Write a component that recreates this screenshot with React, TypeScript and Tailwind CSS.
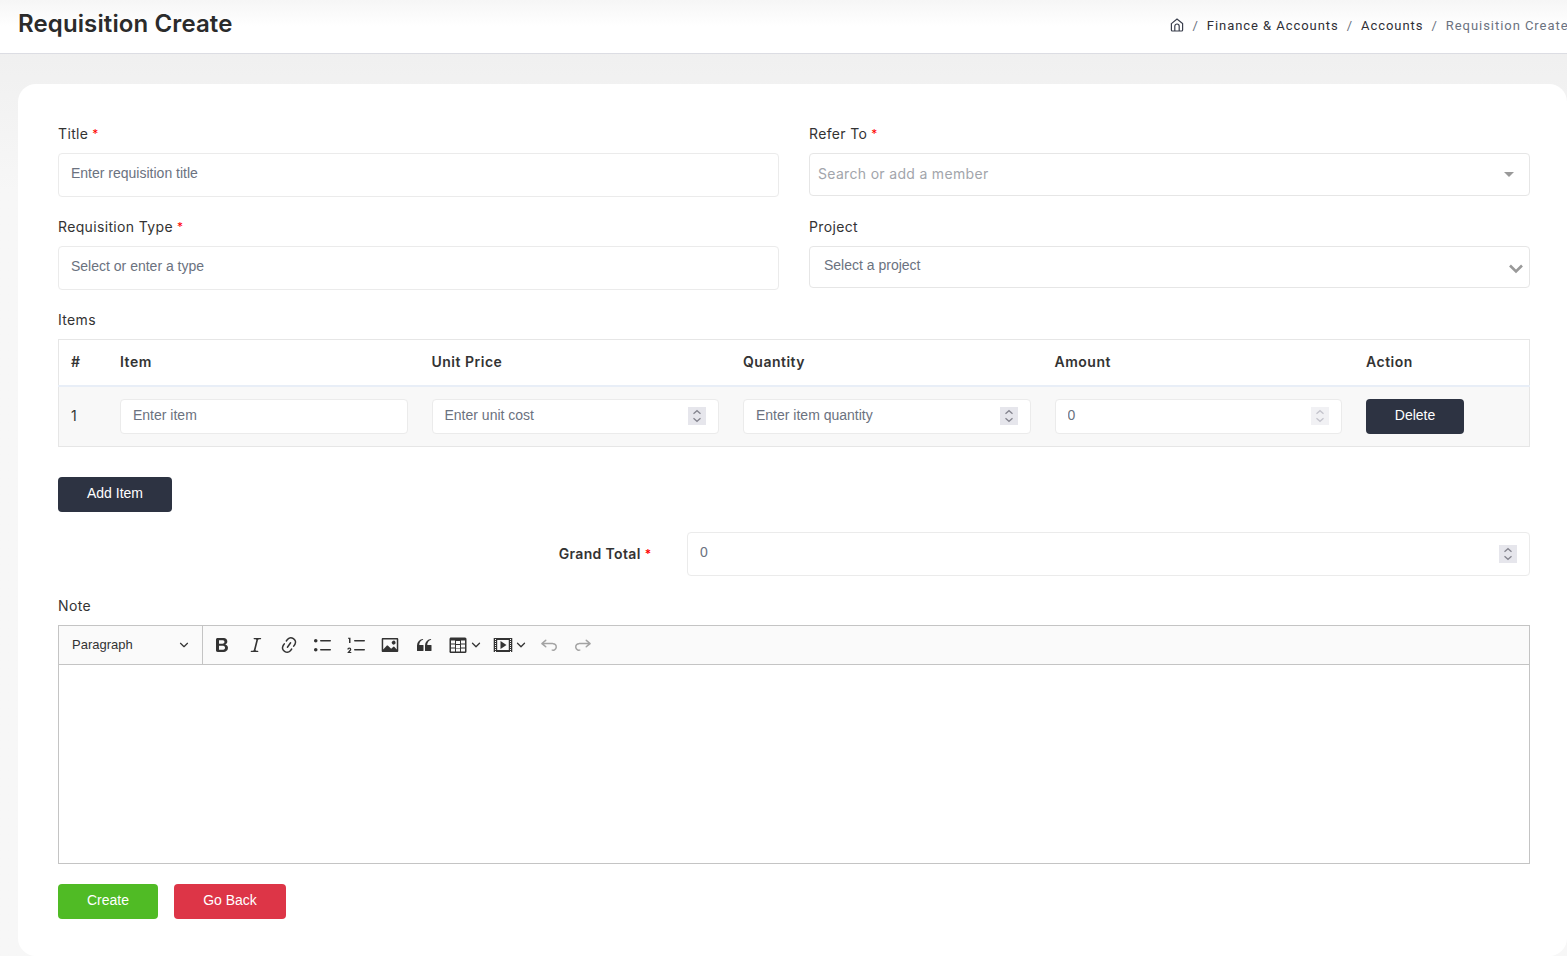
import type { ReactNode } from "react";
import { ChevronDown } from "lucide-react";

const icons: Record<string, string> = {
  bold: "M10.187 17H5.773c-.637 0-1.092-.138-1.364-.415-.273-.277-.409-.718-.409-1.323V4.738c0-.617.14-1.062.419-1.332.279-.27.73-.406 1.354-.406h4.68c.69 0 1.288.041 1.793.124.506.083.96.242 1.36.478.341.197.644.447.906.75a3.262 3.262 0 0 1 .808 2.162c0 1.401-.722 2.426-2.167 3.075C15.05 10.175 16 11.315 16 13.01a3.756 3.756 0 0 1-2.296 3.504 6.1 6.1 0 0 1-1.517.377c-.571.073-1.238.11-2 .11zm-.217-6.217H7v4.087h3.069c1.977 0 2.965-.69 2.965-2.072 0-.707-.256-1.22-.768-1.537-.512-.319-1.277-.478-2.296-.478zM7 5.13v3.619h2.606c.729 0 1.292-.067 1.69-.2a1.6 1.6 0 0 0 .91-.765c.165-.267.247-.566.247-.897 0-.707-.26-1.176-.778-1.409-.519-.232-1.31-.348-2.375-.348H7z",
  italic: "m9.586 14.633.021.004c-.036.335.095.655.393.962.082.083.173.15.274.201h1.474a.6.6 0 1 1 0 1.2H5.304a.6.6 0 0 1 0-1.2h1.15c.474-.07.809-.182 1.005-.334.157-.122.291-.32.404-.597l2.416-9.55a1.053 1.053 0 0 0-.281-.823 1.12 1.12 0 0 0-.442-.296H8.15a.6.6 0 0 1 0-1.2h6.443a.6.6 0 1 1 0 1.2h-1.195c-.376.056-.65.155-.823.296-.215.175-.423.439-.623.79l-2.366 9.347z",
  link: "m11.077 15 .991-1.416a.75.75 0 1 1 1.229.86l-1.148 1.64a.748.748 0 0 1-.217.206 5.251 5.251 0 0 1-8.503-5.955.741.741 0 0 1 .12-.274l1.147-1.639a.75.75 0 1 1 1.228.86L4.933 10.7l.006.003a3.75 3.75 0 0 0 6.132 4.294l.006.004zm5.494-5.335a.748.748 0 0 1-.12.274l-1.147 1.639a.75.75 0 1 1-1.228-.86l.86-1.23a3.75 3.75 0 0 0-6.144-4.301l-.86 1.229a.75.75 0 0 1-1.229-.86l1.148-1.64a.748.748 0 0 1 .217-.206 5.251 5.251 0 0 1 8.503 5.955zm-4.563-2.532a.75.75 0 0 1 .184 1.045l-3.155 4.505a.75.75 0 1 1-1.229-.86l3.155-4.506a.75.75 0 0 1 1.045-.184z",
  bullet: "M7 5.75c0 .414.336.75.75.75h9.5a.75.75 0 1 0 0-1.5h-9.5a.75.75 0 0 0-.75.75zm-6 0C1 4.784 1.777 4 2.75 4c.966 0 1.75.777 1.75 1.75 0 .966-.777 1.75-1.75 1.75C1.784 7.5 1 6.723 1 5.75zm6 9c0 .414.336.75.75.75h9.5a.75.75 0 1 0 0-1.5h-9.5a.75.75 0 0 0-.75.75zm-6 0c0-.966.777-1.75 1.75-1.75.966 0 1.75.777 1.75 1.75 0 .966-.777 1.75-1.75 1.75-.966 0-1.75-.777-1.75-1.75z",
  numbered: "M7 5.75c0 .414.336.75.75.75h9.5a.75.75 0 1 0 0-1.5h-9.5a.75.75 0 0 0-.75.75zM3.5 3v5H2V3.7H1v-1h2.5V3zM.343 17.857l2.59-3.257H2.92a.6.6 0 1 0-1.04 0H.302a2 2 0 1 1 3.995 0h-.001c-.048.405-.16.734-.333.988-.175.254-.59.692-1.244 1.312H4.3v1h-4l.043-.043zM7 14.75a.75.75 0 0 1 .75-.75h9.5a.75.75 0 1 1 0 1.5h-9.5a.75.75 0 0 1-.75-.75z",
  image: "M6.91 10.54c.26-.23.64-.21.88.03l3.36 3.14 2.23-2.06a.64.64 0 0 1 .87 0l2.52 2.97V4.5H3.2v10.12l3.71-4.08zm10.27-7.51c.6 0 1.09.47 1.09 1.05v11.84c0 .59-.49 1.06-1.09 1.06H2.79c-.6 0-1.09-.47-1.09-1.06V4.08c0-.58.49-1.05 1.1-1.05h14.38zm-5.22 5.56a1.96 1.96 0 1 1 3.4-1.96 1.96 1.96 0 0 1-3.4 1.96z",
  quote: "M3 10.423a6.5 6.5 0 0 1 6.056-6.408l.038.67C6.448 5.423 5.354 7.663 5.22 10H9c.552 0 .5.432.5.986v4.511c0 .554-.448.503-1 .503h-5c-.552 0-.5-.449-.5-1.003v-4.574zm8 0a6.5 6.5 0 0 1 6.056-6.408l.038.67c-2.646.739-3.74 2.979-3.873 5.315H17c.552 0 .5.432.5.986v4.511c0 .554-.448.503-1 .503h-5c-.552 0-.5-.449-.5-1.003v-4.574z",
  table: "M3 5.5v3h4v-3H3zm0 4v3h4v-3H3zm0 4v3h4v-3H3zm5 3h4v-3H8v3zm5 0h4v-3h-4v3zm4-4v-3h-4v3h4zm0-4v-3h-4v3h4zm1.5 8a1.5 1.5 0 0 1-1.5 1.5H3A1.5 1.5 0 0 1 1.5 16V4c0-.828.672-1.5 1.5-1.5h14a1.5 1.5 0 0 1 1.5 1.5v12zm-6.5-7.5v-3H8v3h4zm0 4v-3H8v3h4z",
  media: "M18.68 3.03c.6 0 .59-.03.59.55v12.84c0 .59.01.56-.59.56H1.29c-.6 0-.59.03-.59-.56V3.58c0-.58 0-.55.6-.55h17.38zM15.77 15V5H4.2v10h11.57zM2 4v1h1V4H2zm0 2v1h1V6H2zm0 2v1h1V8H2zm0 2v1h1v-1H2zm0 2v1h1v-1H2zm0 2v1h1v-1H2zm0 2v1h1v-1H2zM17 4v1h1V4h-1zm0 2v1h1V6h-1zm0 2v1h1V8h-1zm0 2v1h1v-1h-1zm0 2v1h1v-1h-1zm0 2v1h1v-1h-1zm0 2v1h1v-1h-1zM7.5 6l6 4-6 4V6z",
  undo: "m5.042 9.367 2.189 1.837a.75.75 0 0 1-.965 1.149l-3.788-3.18a.747.747 0 0 1-.21-.284.75.75 0 0 1 .17-.945L6.23 4.762a.75.75 0 1 1 .964 1.15L4.863 7.866h8.917A.75.75 0 0 1 14 7.9a4 4 0 1 1-1.477 7.718l.344-1.489a2.5 2.5 0 1 0 1.094-4.73l.008-.032H5.042z",
  redo: "m14.958 9.367-2.189 1.837a.75.75 0 0 0 .965 1.149l3.788-3.18a.747.747 0 0 0 .21-.284.75.75 0 0 0-.17-.945L13.77 4.762a.75.75 0 1 0-.964 1.15l2.331 1.955H6.22A.75.75 0 0 0 6 7.9a4 4 0 1 0 1.477 7.718l-.344-1.489A2.5 2.5 0 1 1 6.039 9.4l-.008-.032h8.927z",
};

function EditorIcon({ name, muted }: { name: string; muted?: boolean }) {
  return (
    <svg viewBox="0 0 20 20" className={`h-5 w-5 shrink-0 ${muted ? "text-[#a3a3a3]" : "text-[#333333]"}`} fill="currentColor">
      <path d={icons[name]} />
    </svg>
  );
}

function ToolButton({ name, muted, dropdown, className = "" }: { name: string; muted?: boolean; dropdown?: boolean; className?: string }) {
  return (
    <div className={`flex h-[38px] items-center justify-center ${dropdown ? "w-[44px]" : "w-[33.6px]"} ${className}`}>
      <EditorIcon name={name} muted={muted} />
      {dropdown && <ChevronDown className="ml-[1px] h-[14px] w-[14px] shrink-0 text-[#333333]" strokeWidth={2.2} />}
    </div>
  );
}

function Label({ text, required, className = "" }: { text: string; required?: boolean; className?: string }) {
  return (
    <label className={`block text-sm leading-5 tracking-[0.35px] text-[#333333] ${className}`}>
      {text}
      {required && <span className="relative -top-[1px] ml-[4px] text-xs text-[#ff0000]">*</span>}
    </label>
  );
}

function Stepper({ faded }: { faded?: boolean }) {
  return (
    <span className={`absolute right-[13px] top-1/2 flex h-[18px] w-[18px] -translate-y-1/2 items-center justify-center ${faded ? "bg-[#f1f1f4] text-[#c4c4cc]" : "bg-[#e6e6ec] text-[#85858f]"}`}>
      <svg viewBox="0 0 18 18" className="h-[18px] w-[18px]" fill="none" stroke="currentColor" strokeWidth="1.3">
        <path d="M5.5 6.7 9 3.7l3.5 3" />
        <path d="M5.5 11.3 9 14.3l3.5-3" />
      </svg>
    </span>
  );
}

function TextBox({ placeholder, value, stepper, faded, compact, className = "" }: { placeholder?: string; value?: string; stepper?: boolean; faded?: boolean; compact?: boolean; className?: string }) {
  return (
    <div className={`relative ${className}`}>
      <input
        type="text"
        readOnly
        placeholder={placeholder}
        value={value ?? ""}
        className={`h-full w-full rounded-[4px] border border-[#ebebeb] bg-white pl-[12px] pr-[36px] font-['Liberation_Sans',sans-serif] text-sm text-[#6b7280] placeholder:text-[#6b7280] outline-none ${compact ? "pb-[2px]" : "pb-[4px]"}`}
      />
      {stepper && <Stepper faded={faded} />}
    </div>
  );
}

function HeaderCell({ children, className = "" }: { children: ReactNode; className?: string }) {
  return <th className={`h-[46px] border-b-2 border-[#e8eef7] p-0 px-[12px] text-left text-sm font-semibold tracking-[0.5px] text-[#333333] ${className}`}>{children}</th>;
}

export default function App() {
  return (
    <div className="flex h-[956px] w-[1567px] flex-col overflow-hidden bg-gradient-to-b from-[#ededed] to-[#f7f7f7] to-[20%] font-['Inter',sans-serif]">
      <header className="flex h-[54px] shrink-0 items-start justify-between border-b border-[#dcdde3] bg-gradient-to-b from-[#f6f6f6] via-white to-white pl-[18px]">
        <h1 className="mt-[7px] text-2xl font-semibold leading-[34px] tracking-[0.12px] text-[#2b2b2b]">Requisition Create</h1>
        <nav className="-mr-[1.5px] mt-[16px] flex shrink-0 items-center font-['Roboto',sans-serif] text-[13px] leading-5 tracking-[0.95px] text-[#2f2f36]">
          <svg viewBox="0 0 14 14" className="-mt-[3px] h-[14px] w-[14px]" fill="none" stroke="#3a3f4d" strokeWidth="1.2">
            <path d="M1.4 5.6 7 1l5.6 4.6V12a1 1 0 0 1-1 1H2.4a1 1 0 0 1-1-1z" />
            <path d="M4.8 13V8.2a2.2 2.2 0 0 1 4.4 0V13" />
          </svg>
          <span className="mx-[8px] text-[#6b7280]">/</span>
          <span>Finance &amp; Accounts</span>
          <span className="mx-[8px] text-[#6b7280]">/</span>
          <span>Accounts</span>
          <span className="mx-[8px] text-[#6b7280]">/</span>
          <span className="text-[#6b7280]">Requisition Create</span>
        </nav>
      </header>

      <main className="ml-[18px] mt-[30px] flex-1 rounded-[18px] bg-white pl-[40px] pr-[37px] pt-[40px]">
        <div className="grid grid-cols-2 gap-x-[30px]">
          <div>
            <Label text="Title" required />
            <TextBox placeholder="Enter requisition title" className="mt-[9px] h-[44px]" />
          </div>
          <div>
            <Label text="Refer To" required />
            <div className="mt-[9px] flex h-[43px] items-center justify-between rounded-[4px] border border-[#e6e6e6] pl-[8px] pr-[15px]">
              <span className="pb-[2px] text-sm tracking-[0.32px] text-[#a2a5ab]">Search or add a member</span>
              <span className="h-0 w-0 border-x-[5px] border-t-[5px] border-x-transparent border-t-[#999999]" />
            </div>
          </div>
        </div>

        <div className="mt-[20px] grid grid-cols-2 gap-x-[30px]">
          <div>
            <Label text="Requisition Type" required />
            <TextBox placeholder="Select or enter a type" className="mt-[9px] h-[44px]" />
          </div>
          <div>
            <Label text="Project" />
            <div className="relative mt-[9px] flex h-[42px] items-center rounded-[4px] border border-[#e6e6e6] pb-[4px] pl-[14px] font-['Liberation_Sans',sans-serif] text-sm text-[#6b7280]">
              Select a project
              <svg viewBox="0 0 14 10" className="absolute right-[6px] top-[17px] h-[10px] w-[14px]" fill="none" stroke="#999999" strokeWidth="2.6">
                <path d="M1 1.5 7 7.5l6-6" />
              </svg>
            </div>
          </div>
        </div>

        <Label text="Items" className="mt-[20px]" />
        <table className="mt-[9px] w-full table-fixed border-collapse border border-[#e6e6e6]">
          <colgroup>
            <col className="w-[49.5px]" />
            <col className="w-[311.5px]" />
            <col className="w-[311.5px]" />
            <col className="w-[311.5px]" />
            <col className="w-[311.5px]" />
            <col />
          </colgroup>
          <thead>
            <tr>
              <HeaderCell>#</HeaderCell>
              <HeaderCell>Item</HeaderCell>
              <HeaderCell>Unit Price</HeaderCell>
              <HeaderCell>Quantity</HeaderCell>
              <HeaderCell>Amount</HeaderCell>
              <HeaderCell>Action</HeaderCell>
            </tr>
          </thead>
          <tbody>
            <tr className="h-[61px] bg-[#f8f8f8]">
              <td className="px-[12px] text-sm text-[#333333]">1</td>
              <td className="px-[12px]"><TextBox placeholder="Enter item" compact className="h-[35px]" /></td>
              <td className="px-[12px]"><TextBox placeholder="Enter unit cost" stepper compact className="h-[35px]" /></td>
              <td className="px-[12px]"><TextBox placeholder="Enter item quantity" stepper compact className="h-[35px]" /></td>
              <td className="px-[12px]"><TextBox value="0" stepper faded compact className="h-[35px]" /></td>
              <td className="px-[12px]">
                <button className="h-[35px] w-[98px] rounded-[4px] bg-[#2d3342] pb-[3px] font-['Liberation_Sans',sans-serif] text-sm text-white">Delete</button>
              </td>
            </tr>
          </tbody>
        </table>

        <button className="mt-[30px] block h-[35px] w-[114px] rounded-[4px] bg-[#2d3342] pb-[3px] font-['Liberation_Sans',sans-serif] text-sm text-white">Add Item</button>

        <div className="mt-[20px] flex items-center">
          <div className="w-[593.5px] text-right text-sm font-semibold tracking-[0.35px] text-[#333333]">
            Grand Total<span className="relative -top-[1px] ml-[4px] text-xs text-[#ff0000]">*</span>
          </div>
          <TextBox value="0" stepper className="ml-[35.5px] h-[44px] flex-1" />
        </div>

        <Label text="Note" className="mt-[20px]" />
        <div className="mt-[9px] border border-[#c4c4c4]">
          <div className="flex h-[39px] items-center border-b border-[#c4c4c4] bg-[#fafafa]">
            <div className="flex h-full w-[144px] items-center justify-between border-r border-[#c4c4c4] pl-[13px] pr-[11px] font-['Liberation_Sans',sans-serif] text-[13px] text-[#333333]">
              Paragraph
              <ChevronDown className="h-[14px] w-[14px]" strokeWidth={2} />
            </div>
            <div className="flex items-center pl-[2.4px]">
              <ToolButton name="bold" />
              <ToolButton name="italic" />
              <ToolButton name="link" />
              <ToolButton name="bullet" />
              <ToolButton name="numbered" />
              <ToolButton name="image" />
              <ToolButton name="quote" />
              <ToolButton name="table" dropdown className="ml-[3px]" />
              <ToolButton name="media" dropdown className="ml-[1px]" />
              <ToolButton name="undo" muted />
              <ToolButton name="redo" muted />
            </div>
          </div>
          <div className="h-[198px] bg-white" />
        </div>

        <div className="mt-[20px] flex gap-[16px]">
          <button className="h-[35px] w-[100px] rounded-[4px] bg-[#50bb25] pb-[3px] font-['Liberation_Sans',sans-serif] text-sm text-white">Create</button>
          <button className="h-[35px] w-[112px] rounded-[4px] bg-[#dd3547] pb-[3px] font-['Liberation_Sans',sans-serif] text-sm text-white">Go Back</button>
        </div>
      </main>
    </div>
  );
}
